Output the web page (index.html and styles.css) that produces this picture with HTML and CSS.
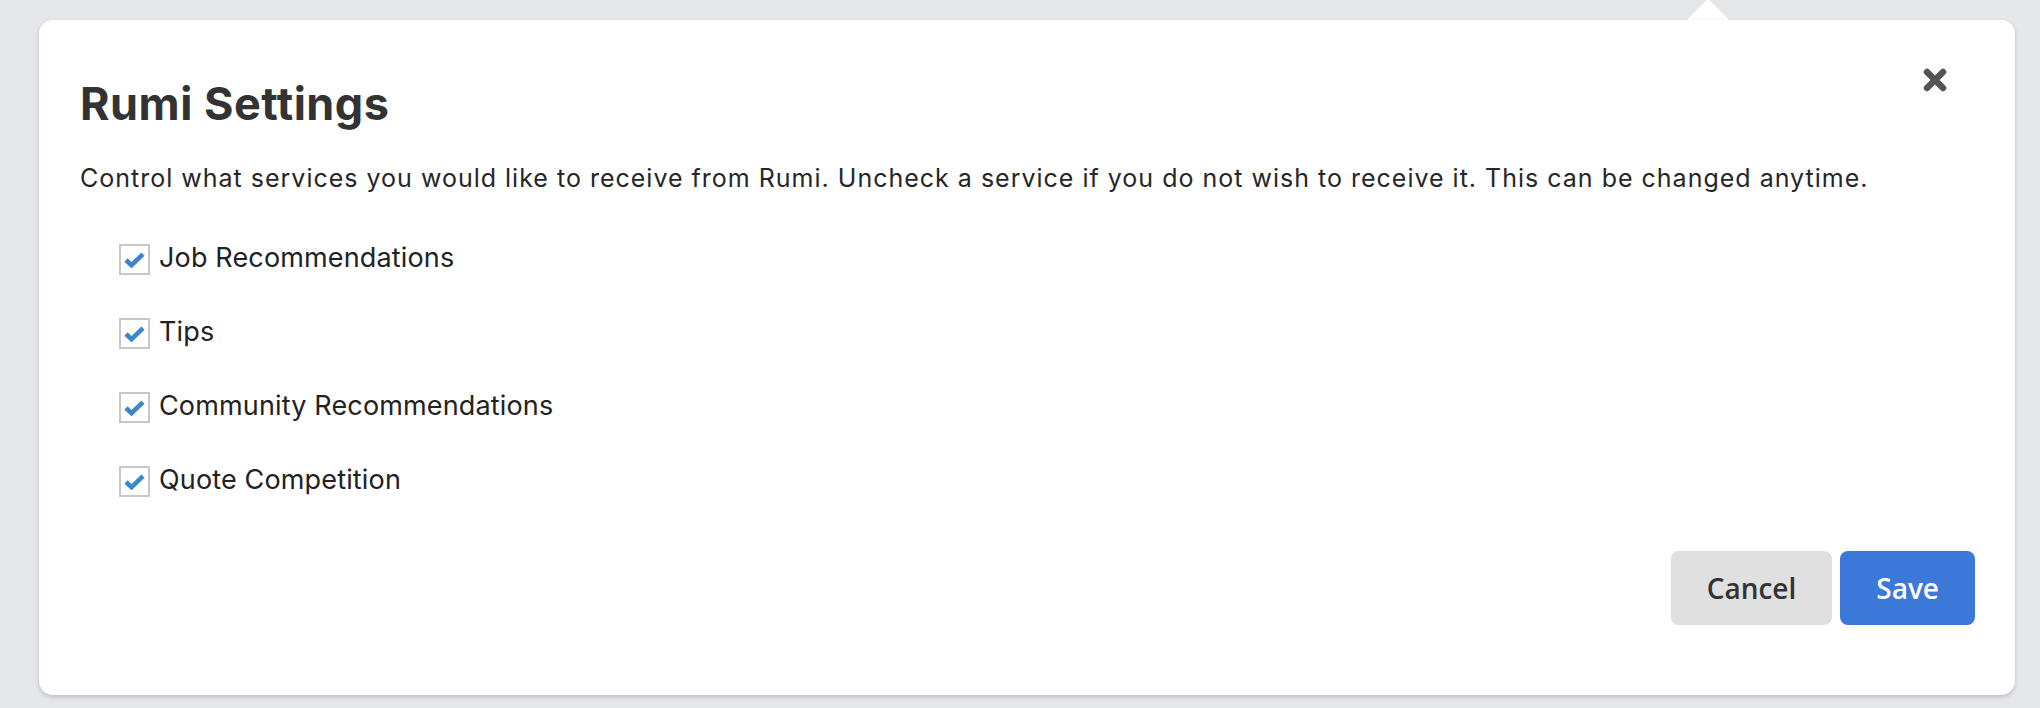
FILE: index.html
```html
<!DOCTYPE html>
<html>
<head>
    <title>Rumi Settings</title>
    <link rel="stylesheet" href="styles.css">
</head>
<body>

    <div class="settings-card">
        <div class="settings-header">
            <h1>Rumi Settings</h1>
            <button class="close-btn" aria-label="Close">
                <svg width="24" height="24" viewBox="0 0 24 24">
                    <path d="M4 4 L20 20 M20 4 L4 20" stroke="#555" stroke-width="6.5" stroke-linecap="round" fill="none"/>
                </svg>
            </button>
        </div>

        <p class="intro">Control what services you would like to receive from Rumi. Uncheck a service if you do not wish to receive it. This can be changed anytime.</p>

        <ul class="services">
            <li>
                <span class="check-box">
                    <svg width="21" height="16" viewBox="0 0 21 16"><path d="M2 8 L7.5 13.2 L19 2.2" stroke="#3b87cf" stroke-width="4.6" fill="none"/></svg>
                </span>
                <span class="label">Job Recommendations</span>
            </li>
            <li>
                <span class="check-box">
                    <svg width="21" height="16" viewBox="0 0 21 16"><path d="M2 8 L7.5 13.2 L19 2.2" stroke="#3b87cf" stroke-width="4.6" fill="none"/></svg>
                </span>
                <span class="label">Tips</span>
            </li>
            <li>
                <span class="check-box">
                    <svg width="21" height="16" viewBox="0 0 21 16"><path d="M2 8 L7.5 13.2 L19 2.2" stroke="#3b87cf" stroke-width="4.6" fill="none"/></svg>
                </span>
                <span class="label">Community Recommendations</span>
            </li>
            <li>
                <span class="check-box">
                    <svg width="21" height="16" viewBox="0 0 21 16"><path d="M2 8 L7.5 13.2 L19 2.2" stroke="#3b87cf" stroke-width="4.6" fill="none"/></svg>
                </span>
                <span class="label">Quote Competition</span>
            </li>
        </ul>

        <div class="actions">
            <button class="btn btn-cancel">Cancel</button>
            <button class="btn btn-save">Save</button>
        </div>
    </div>

</body>
</html>
```

FILE: styles.css
```css
body {
    margin: 0;
    padding: 20px 25px 12px 39px;
    background-color: #e6e7eb;
    font-family: Inter, "Noto Sans", sans-serif;
    color: #222;
}
.settings-card {
    position: relative;
    background-color: #fff;
    border-radius: 14px;
    padding: 48px 40px 70px 41px;
    box-shadow: 0 2px 4px rgba(0, 0, 0, 0.18);
}
.settings-card::before {
    content: "";
    position: absolute;
    top: -16px;
    right: 290px;
    width: 32px;
    height: 32px;
    background-color: #fff;
    border: 1px solid #dcdde0;
    transform: rotate(45deg);
    z-index: -1;
}
.settings-header {
    display: flex;
    justify-content: space-between;
    align-items: flex-start;
}
h1 {
    margin: 10px 0 0 0;
    font-size: 45px;
    line-height: 52px;
    font-weight: 700;
    letter-spacing: 0.5px;
    color: #333;
}
.close-btn {
    margin-right: 28px;
    padding: 0;
    border: none;
    background: none;
    width: 24px;
    height: 24px;
    cursor: pointer;
}
.close-btn svg {
    display: block;
}
.intro {
    margin: 32px 0 0 0;
    font-size: 25px;
    line-height: 32px;
    letter-spacing: 1px;
    color: #262626;
}
.services {
    list-style-type: none;
    margin: 46px 0 0 0;
    padding-left: 39px;
    display: flex;
    flex-direction: column;
    gap: 38px;
}
.services li {
    display: flex;
    align-items: flex-start;
    gap: 9px;
    font-size: 27px;
    line-height: 36px;
    letter-spacing: 0.15px;
}
.check-box {
    margin-top: 4px;
    width: 27px;
    height: 27px;
    border: 2px solid #c7c7c7;
    display: flex;
    align-items: center;
    justify-content: center;
}
.actions {
    margin-top: 53px;
    display: flex;
    justify-content: flex-end;
    gap: 8px;
}
.btn {
    height: 74px;
    padding: 0 36px;
    border: none;
    border-radius: 8px;
    font-family: "Open Sans", sans-serif;
    font-size: 28px;
    font-weight: 600;
    cursor: pointer;
}
.btn-cancel {
    background-color: #e0e0e0;
    color: #333;
}
.btn-save {
    background-color: #3b78d8;
    color: #fff;
}
```
